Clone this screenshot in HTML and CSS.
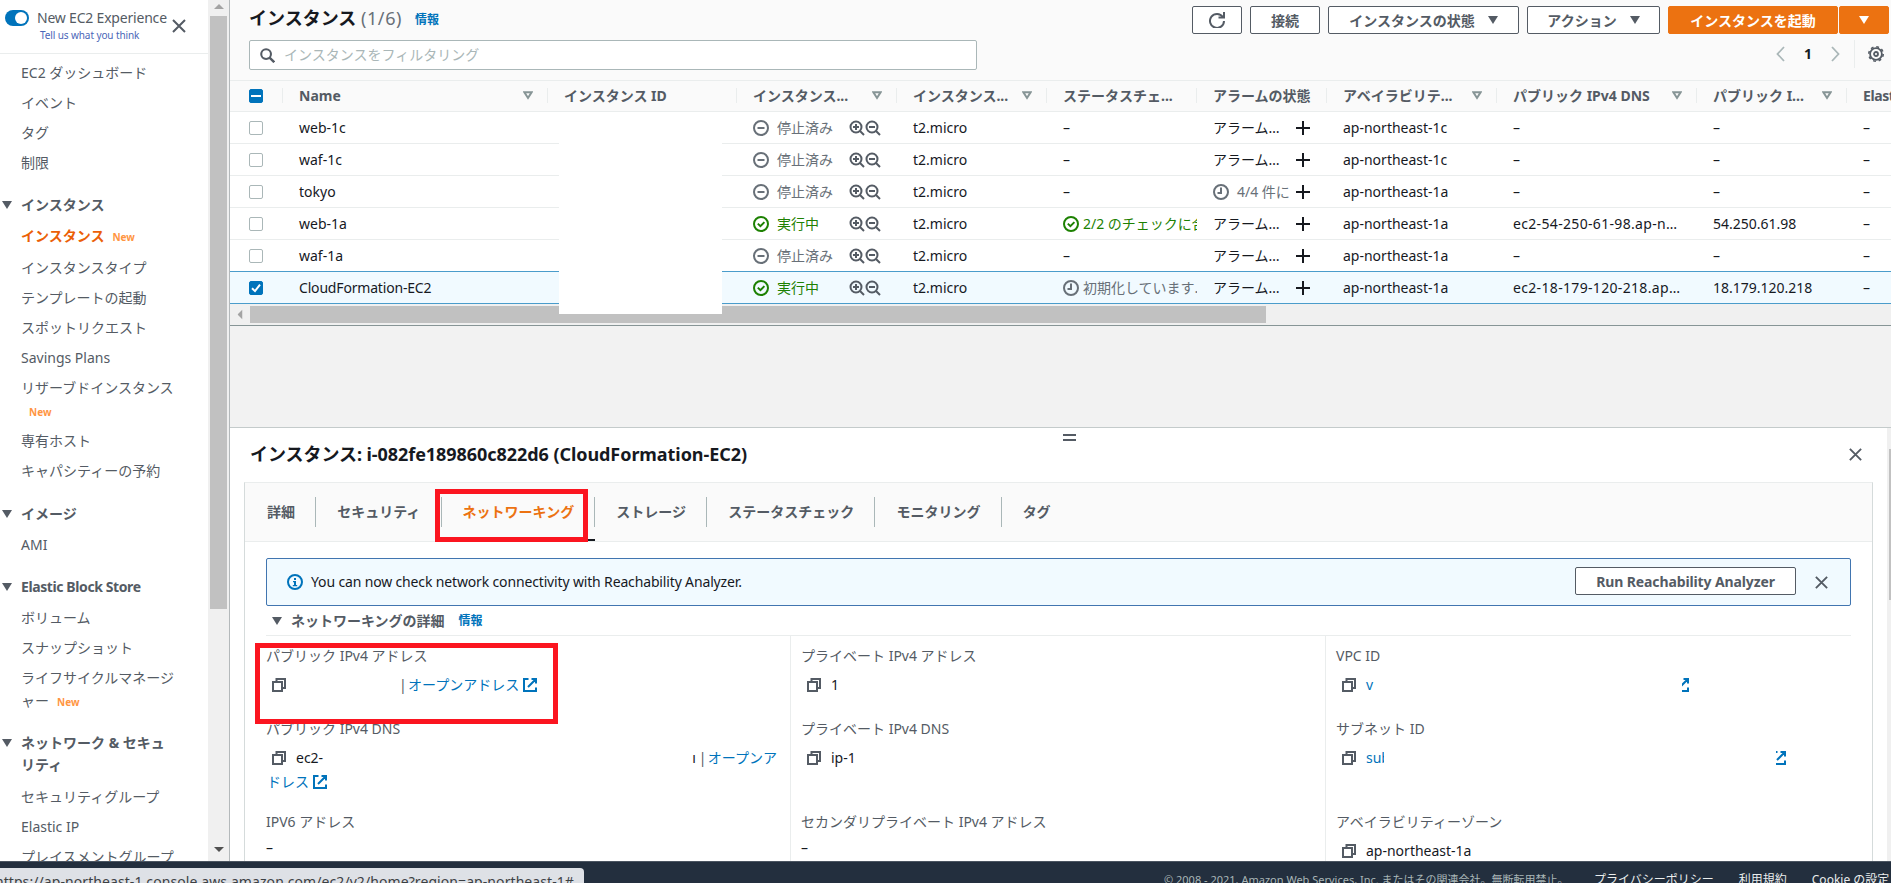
FILE: index.html
```html
<!DOCTYPE html>
<html lang="ja">

<head>
    <meta charset="UTF-8">
    <meta name="viewport" content="width=device-width, initial-scale=1.0">
    <title>インスタンス | EC2</title>
    <link rel="stylesheet" href="styles.css">
</head>

<body>

    <!-- icons -->
    <svg class="icon-defs">
        <symbol id="close" viewBox="0 0 16 16"><path d="M2 2l12 12M14 2L2 14" fill="none" stroke="currentColor" stroke-width="2"/></symbol>
        <symbol id="stopped" viewBox="0 0 16 16"><circle cx="8" cy="8" r="7" fill="none" stroke="currentColor" stroke-width="2"/><path d="M4.500 8h7" stroke="currentColor" stroke-width="2"/></symbol>
        <symbol id="ok" viewBox="0 0 16 16"><circle cx="8" cy="8" r="7" fill="none" stroke="currentColor" stroke-width="2"/><path d="M4.800 7.600l2.600 2.500 4-4" fill="none" stroke="currentColor" stroke-width="2"/></symbol>
        <symbol id="pending" viewBox="0 0 16 16"><circle cx="8" cy="8" r="7" fill="none" stroke="currentColor" stroke-width="2"/><path d="M8 3.500V9H4.500" fill="none" stroke="currentColor" stroke-width="2"/></symbol>
        <symbol id="zoom-in" viewBox="0 0 16 16"><circle cx="7" cy="7" r="5.500" fill="none" stroke="currentColor" stroke-width="2"/><path d="M11 11l4 4" stroke="currentColor" stroke-width="2"/><path d="M4 7h6M7 4v6" stroke="currentColor" stroke-width="2"/></symbol>
        <symbol id="zoom-out" viewBox="0 0 16 16"><circle cx="7" cy="7" r="5.500" fill="none" stroke="currentColor" stroke-width="2"/><path d="M11 11l4 4M4 7h6" stroke="currentColor" stroke-width="2"/></symbol>
        <symbol id="plus" viewBox="0 0 16 16"><path d="M1 8h14M8 1v14" stroke="currentColor" stroke-width="2"/></symbol>
        <symbol id="sort" viewBox="0 0 10 9"><path d="M1.400 1.300h7.200L5 7z" fill="none" stroke="currentColor" stroke-width="2"/></symbol>
        <symbol id="caret" viewBox="0 0 10 8"><path d="M0 0h10L5 8z" fill="currentColor"/></symbol>
        <symbol id="arrow" viewBox="0 0 10 5"><path d="M0 0h10L5 5z" fill="currentColor"/></symbol>
        <symbol id="copy" viewBox="0 0 14 14"><path d="M1 4h9v9H1z" fill="none" stroke="currentColor" stroke-width="2"/><path d="M4.500 4V1H13v9h-3" fill="none" stroke="currentColor" stroke-width="2"/></symbol>
        <symbol id="external" viewBox="0 0 14 14"><path d="M5.500 1H1v12h12V9.500M8.500 1H13v4.500M12.500 1.500L5 9" fill="none" stroke="currentColor" stroke-width="2"/></symbol>
        <symbol id="info" viewBox="0 0 16 16"><circle cx="8" cy="8" r="7" fill="none" stroke="currentColor" stroke-width="2"/><path d="M7 4h2v2H7zM6 7h3v4h1.200v1.300H5.800V11H7V8.300H6z" fill="currentColor"/></symbol>
    </svg>

    <div class="console">

        <div class="sidebar">
            <div class="nav">
                <div class="experience">
                    <span class="toggle"></span>
                    <div class="experience-text">
                        New EC2 Experience
                        <a href="#">Tell us what you think</a>
                    </div>
                    <svg class="close-nav"><use href="#close"/></svg>
                </div>
                <ul class="nav-list">
                    <li>EC2 ダッシュボード</li>
                    <li>イベント</li>
                    <li>タグ</li>
                    <li>制限</li>
                    <li class="heading"><svg><use href="#caret"/></svg>インスタンス</li>
                    <li class="active">インスタンス<span class="new">New</span></li>
                    <li>インスタンスタイプ</li>
                    <li>テンプレートの起動</li>
                    <li>スポットリクエスト</li>
                    <li>Savings Plans</li>
                    <li class="wrapped">リザーブドインスタンス<br><span class="new">New</span></li>
                    <li>専有ホスト</li>
                    <li class="last">キャパシティーの予約</li>
                    <li class="heading"><svg><use href="#caret"/></svg>イメージ</li>
                    <li>AMI</li>
                    <li class="heading latin"><svg><use href="#caret"/></svg>Elastic Block Store</li>
                    <li>ボリューム</li>
                    <li>スナップショット</li>
                    <li class="wrapped">ライフサイクルマネージ<br>ャー<span class="new">New</span></li>
                    <li class="heading tall"><svg><use href="#caret"/></svg>ネットワーク &amp; セキュ<br>リティ</li>
                    <li>セキュリティグループ</li>
                    <li>Elastic IP</li>
                    <li>プレイスメントグループ</li>
                </ul>
            </div>
            <div class="nav-scroll">
                <svg class="up"><use href="#arrow"/></svg>
                <div class="nav-thumb"></div>
                <svg class="down"><use href="#arrow"/></svg>
            </div>
        </div>

        <div class="main">

            <div class="toolbar">
                <h1>インスタンス <span>(1/6)</span></h1>
                <a class="info-link" href="#">情報</a>
                <div class="actions">
                    <button class="btn refresh"><svg viewBox="0 0 16 16"><path d="M13.800 5A7 7 0 1 0 15 9" fill="none" stroke="currentColor" stroke-width="2"/><path d="M9.500 5.500H15V0" fill="none" stroke="currentColor" stroke-width="2"/></svg></button>
                    <button class="btn connect">接続</button>
                    <button class="btn state">インスタンスの状態<svg><use href="#caret"/></svg></button>
                    <button class="btn action">アクション<svg><use href="#caret"/></svg></button>
                    <div class="launch">
                        <button class="btn primary">インスタンスを起動</button>
                        <button class="btn primary more"><svg><use href="#caret"/></svg></button>
                    </div>
                </div>
            </div>

            <div class="filter-bar">
                <div class="search">
                    <svg viewBox="0 0 16 16"><circle cx="6.500" cy="6.500" r="5.200" fill="none" stroke="currentColor" stroke-width="2.200"/><path d="M10.200 10.200l5 5" stroke="currentColor" stroke-width="2.600"/></svg>
                    インスタンスをフィルタリング
                </div>
                <div class="pager">
                    <svg viewBox="0 0 9 16"><path d="M8 1L1.500 8 8 15" fill="none" stroke="currentColor" stroke-width="1.800"/></svg>
                    <b>1</b>
                    <svg viewBox="0 0 9 16"><path d="M1 1l6.500 7L1 15" fill="none" stroke="currentColor" stroke-width="1.800"/></svg>
                </div>
                <div class="settings">
                    <svg viewBox="0 0 16 16"><circle cx="8" cy="8" r="5.900" fill="none" stroke="currentColor" stroke-width="1.800"/><circle cx="8" cy="8" r="7.200" fill="none" stroke="currentColor" stroke-width="1.600" stroke-dasharray="2.830 2.830"/><circle cx="8" cy="8" r="2" fill="none" stroke="currentColor" stroke-width="1.800"/></svg>
                </div>
            </div>

            <div class="table">
                <div class="row head">
                    <div class="cell"><span class="check mixed"></span></div>
                    <div class="cell"><span>Name</span><svg><use href="#sort"/></svg></div>
                    <div class="cell">インスタンス ID</div>
                    <div class="cell"><span>インスタンス...</span><svg><use href="#sort"/></svg></div>
                    <div class="cell"><span>インスタンス...</span><svg><use href="#sort"/></svg></div>
                    <div class="cell">ステータスチェ...</div>
                    <div class="cell">アラームの状態</div>
                    <div class="cell"><span>アベイラビリテ...</span><svg><use href="#sort"/></svg></div>
                    <div class="cell"><span>パブリック IPv4 DNS</span><svg><use href="#sort"/></svg></div>
                    <div class="cell"><span>パブリック I...</span><svg><use href="#sort"/></svg></div>
                    <div class="cell latin">Elastic IP</div>
                </div>
                <div class="row">
                    <div class="cell"><span class="check"></span></div>
                    <div class="cell">web-1c</div>
                    <div class="cell"></div>
                    <div class="cell status"><svg><use href="#stopped"/></svg><span>停止済み</span><i><svg><use href="#zoom-in"/></svg><svg><use href="#zoom-out"/></svg></i></div>
                    <div class="cell">t2.micro</div>
                    <div class="cell">–</div>
                    <div class="cell alarm"><span>アラーム…</span><svg><use href="#plus"/></svg></div>
                    <div class="cell">ap-northeast-1c</div>
                    <div class="cell">–</div>
                    <div class="cell">–</div>
                    <div class="cell">–</div>
                </div>
                <div class="row">
                    <div class="cell"><span class="check"></span></div>
                    <div class="cell">waf-1c</div>
                    <div class="cell"></div>
                    <div class="cell status"><svg><use href="#stopped"/></svg><span>停止済み</span><i><svg><use href="#zoom-in"/></svg><svg><use href="#zoom-out"/></svg></i></div>
                    <div class="cell">t2.micro</div>
                    <div class="cell">–</div>
                    <div class="cell alarm"><span>アラーム…</span><svg><use href="#plus"/></svg></div>
                    <div class="cell">ap-northeast-1c</div>
                    <div class="cell">–</div>
                    <div class="cell">–</div>
                    <div class="cell">–</div>
                </div>
                <div class="row">
                    <div class="cell"><span class="check"></span></div>
                    <div class="cell">tokyo</div>
                    <div class="cell"></div>
                    <div class="cell status"><svg><use href="#stopped"/></svg><span>停止済み</span><i><svg><use href="#zoom-in"/></svg><svg><use href="#zoom-out"/></svg></i></div>
                    <div class="cell">t2.micro</div>
                    <div class="cell">–</div>
                    <div class="cell alarm"><span class="pending"><svg><use href="#pending"/></svg>4/4 件に</span><svg><use href="#plus"/></svg></div>
                    <div class="cell">ap-northeast-1a</div>
                    <div class="cell">–</div>
                    <div class="cell">–</div>
                    <div class="cell">–</div>
                </div>
                <div class="row">
                    <div class="cell"><span class="check"></span></div>
                    <div class="cell">web-1a</div>
                    <div class="cell"></div>
                    <div class="cell status running"><svg><use href="#ok"/></svg><span>実行中</span><i><svg><use href="#zoom-in"/></svg><svg><use href="#zoom-out"/></svg></i></div>
                    <div class="cell">t2.micro</div>
                    <div class="cell health passed"><svg><use href="#ok"/></svg>2/2 のチェックに合</div>
                    <div class="cell alarm"><span>アラーム…</span><svg><use href="#plus"/></svg></div>
                    <div class="cell">ap-northeast-1a</div>
                    <div class="cell address">ec2-54-250-61-98.ap-n…</div>
                    <div class="cell">54.250.61.98</div>
                    <div class="cell">–</div>
                </div>
                <div class="row">
                    <div class="cell"><span class="check"></span></div>
                    <div class="cell">waf-1a</div>
                    <div class="cell"></div>
                    <div class="cell status"><svg><use href="#stopped"/></svg><span>停止済み</span><i><svg><use href="#zoom-in"/></svg><svg><use href="#zoom-out"/></svg></i></div>
                    <div class="cell">t2.micro</div>
                    <div class="cell">–</div>
                    <div class="cell alarm"><span>アラーム…</span><svg><use href="#plus"/></svg></div>
                    <div class="cell">ap-northeast-1a</div>
                    <div class="cell">–</div>
                    <div class="cell">–</div>
                    <div class="cell">–</div>
                </div>
                <div class="row selected">
                    <div class="cell"><span class="check on"><svg viewBox="0 0 14 14"><path d="M3 7.200l3 2.900L11 3.600" fill="none" stroke="#fff" stroke-width="2"/></svg></span></div>
                    <div class="cell name">CloudFormation-EC2</div>
                    <div class="cell"></div>
                    <div class="cell status running"><svg><use href="#ok"/></svg><span>実行中</span><i><svg><use href="#zoom-in"/></svg><svg><use href="#zoom-out"/></svg></i></div>
                    <div class="cell">t2.micro</div>
                    <div class="cell health"><svg><use href="#pending"/></svg>初期化しています..</div>
                    <div class="cell alarm"><span>アラーム…</span><svg><use href="#plus"/></svg></div>
                    <div class="cell">ap-northeast-1a</div>
                    <div class="cell address">ec2-18-179-120-218.ap…</div>
                    <div class="cell">18.179.120.218</div>
                    <div class="cell">–</div>
                </div>
                <div class="table-scroll">
                    <svg><use href="#arrow"/></svg>
                    <div class="table-thumb"></div>
                </div>
                <div class="mask"></div>
            </div>

            <div class="split">
                <div class="panel">
                    <div class="handle"></div>
                    <div class="panel-title">
                        <h2>インスタンス: i-082fe189860c822d6 (CloudFormation-EC2)</h2>
                        <svg><use href="#close"/></svg>
                    </div>
                    <div class="card">
                        <div class="tabs">
                            <div class="tab"><span>詳細</span></div>
                            <div class="tab"><span>セキュリティ</span></div>
                            <div class="tab current"><span>ネットワーキング</span></div>
                            <div class="tab"><span>ストレージ</span></div>
                            <div class="tab"><span>ステータスチェック</span></div>
                            <div class="tab"><span>モニタリング</span></div>
                            <div class="tab"><span>タグ</span></div>
                            <div class="marker marker-tab"></div>
                        </div>
                        <div class="card-body">
                            <div class="alert">
                                <svg class="alert-icon"><use href="#info"/></svg>
                                <span class="alert-text">You can now check network connectivity with Reachability Analyzer.</span>
                                <button class="btn analyze">Run Reachability Analyzer</button>
                                <svg class="alert-close"><use href="#close"/></svg>
                            </div>
                            <div class="section">
                                <svg><use href="#caret"/></svg>
                                <b>ネットワーキングの詳細</b>
                                <a class="info-link" href="#">情報</a>
                            </div>
                            <div class="details">
                                <div class="col">
                                    <div class="item">
                                        <div class="label">パブリック IPv4 アドレス</div>
                                        <div class="value"><svg class="copy"><use href="#copy"/></svg><span class="hidden-ip"></span><span class="bar">|</span><a href="#">オープンアドレス</a><svg class="ext"><use href="#external"/></svg></div>
                                    </div>
                                    <div class="item dns">
                                        <div class="label">パブリック IPv4 DNS</div>
                                        <div class="value"><svg class="copy"><use href="#copy"/></svg>ec2-<span class="hidden-dns"></span>ı <span class="bar">|</span><a href="#">オープンア</a></div>
                                        <div class="value second"><a href="#">ドレス</a><svg class="ext"><use href="#external"/></svg></div>
                                    </div>
                                    <div class="item">
                                        <div class="label">IPV6 アドレス</div>
                                        <div class="dash">–</div>
                                    </div>
                                    <div class="marker marker-ip"></div>
                                </div>
                                <div class="col">
                                    <div class="item">
                                        <div class="label">プライベート IPv4 アドレス</div>
                                        <div class="value"><svg class="copy"><use href="#copy"/></svg>1</div>
                                    </div>
                                    <div class="item dns">
                                        <div class="label">プライベート IPv4 DNS</div>
                                        <div class="value"><svg class="copy"><use href="#copy"/></svg>ip-1</div>
                                    </div>
                                    <div class="item">
                                        <div class="label">セカンダリプライベート IPv4 アドレス</div>
                                        <div class="dash">–</div>
                                    </div>
                                </div>
                                <div class="col">
                                    <div class="item">
                                        <div class="label">VPC ID</div>
                                        <div class="value"><svg class="copy"><use href="#copy"/></svg><a class="vpc" href="#">v</a><svg class="ext half" viewBox="7 0 7 14"><use href="#external" width="14" height="14"/></svg></div>
                                    </div>
                                    <div class="item dns">
                                        <div class="label">サブネット ID</div>
                                        <div class="value"><svg class="copy"><use href="#copy"/></svg><a class="subnet" href="#"><span>sub</span></a><svg class="ext most" viewBox="4 0 10 14"><use href="#external" width="14" height="14"/></svg></div>
                                    </div>
                                    <div class="item">
                                        <div class="label">アベイラビリティーゾーン</div>
                                        <div class="value"><svg class="copy"><use href="#copy"/></svg>ap-northeast-1a</div>
                                    </div>
                                </div>
                            </div>
                        </div>
                    </div>
                </div>
                <div class="panel-scroll"><div class="panel-thumb"></div></div>
            </div>
        </div>
    </div>

    <div class="footer">
        <span class="copyright">© 2008 - 2021, Amazon Web Services, Inc. またはその関連会社。無断転用禁止。</span>
        <a href="#">プライバシーポリシー</a>
        <a href="#">利用規約</a>
        <a href="#">Cookie の設定</a>
        <div class="status-url"><span>https://ap-northeast-1.console.aws.amazon.com/ec2/v2/home?region=ap-northeast-1#</span></div>
    </div>

</body>

</html>
```
FILE: styles.css
```css
* {
    box-sizing: border-box;
}

body {
    margin: 0;
    width: 1891px;
    height: 883px;
    overflow: hidden;
    background-color: #fff;
    color: #16191f;
    font-family: "Noto Sans", "Noto Sans CJK JP", sans-serif;
    font-size: 14px;
    line-height: 22px;
}

a {
    color: #0073bb;
    text-decoration: none;
}

svg {
    display: block;
    flex: none;
}

.icon-defs {
    display: none;
}

.console {
    display: flex;
    height: 861px;
    overflow: hidden;
}

/* left navigation */
.sidebar {
    display: flex;
    width: 230px;
    flex: none;
    border-right: 1px solid #b4b9bb;
    color: #545b64;
}

.nav {
    width: 208px;
    overflow: hidden;
}

.experience {
    display: flex;
    height: 54px;
    padding: 10px 0 0 5px;
    border-bottom: 1px solid #eaeded;
}

.toggle {
    width: 24px;
    height: 16px;
    border-radius: 8px;
    background-color: #0073bb;
    display: flex;
    justify-content: flex-end;
    padding: 2px;
}

.toggle::after {
    content: "";
    width: 12px;
    height: 12px;
    border-radius: 50%;
    background-color: #fff;
}

.experience-text {
    width: 134px;
    margin: -1px 0 0 8px;
    line-height: 18px;
    white-space: nowrap;
    letter-spacing: -0.2px;
}

.experience-text a {
    display: block;
    padding-left: 3px;
    font-size: 10px;
    line-height: 16px;
    color: #4a66b8;
    letter-spacing: -0.1px;
}

.close-nav {
    width: 16px;
    height: 16px;
    margin-top: 8px;
}

.nav-list {
    list-style: none;
    margin: 0;
    padding: 4px 0 0 21px;
    white-space: nowrap;
}

.nav-list li {
    height: 30px;
    padding: 4px 0;
}

.nav-list .active {
    height: 32px;
    color: #eb5f07;
    font-weight: bold;
}

.nav-list .wrapped {
    height: 53px;
    padding: 3px 0;
    line-height: 23px;
}

.nav-list .last {
    height: 31px;
}

.nav-list .heading {
    position: relative;
    height: 31px;
    margin-top: 12px;
    font-weight: bold;
}

.nav-list .tall {
    height: 54px;
}

.nav-list .latin, .head .latin {
    letter-spacing: -0.4px;
}

.heading svg {
    position: absolute;
    left: -19px;
    top: 11px;
    width: 10px;
    height: 8px;
}

.new {
    margin-left: 8px;
    font-size: 10px;
    font-weight: bold;
    color: #ff9542;
}

.nav-scroll {
    width: 21px;
    padding: 4px 0 9px;
    display: flex;
    flex-direction: column;
    align-items: center;
    background-color: #f0f0f0;
}

.nav-scroll svg {
    width: 10px;
    height: 5px;
}

.up {
    color: #a3a3a3;
    transform: rotate(180deg);
}

.nav-thumb {
    width: 17px;
    height: 593px;
    margin-top: 7px;
    background-color: #c1c1c1;
}

.down {
    margin-top: auto;
    color: #505050;
}

/* instance list */
.main {
    flex: 1;
    min-width: 0;
    display: flex;
    flex-direction: column;
}

.toolbar {
    display: flex;
    height: 40px;
    padding: 0 2px 0 19px;
    background-color: #fafafa;
}

h1, h2 {
    margin: 0;
    font-size: 18px;
    font-weight: bold;
    line-height: 22px;
    white-space: nowrap;
}

h1 {
    padding-top: 7px;
}

h2 {
    letter-spacing: -0.06px;
}

h1 span {
    font-weight: normal;
    color: #687078;
    letter-spacing: 0.6px;
}

.info-link {
    font-size: 12px;
    font-weight: bold;
    margin: 9px 0 0 13px;
}

.actions {
    display: flex;
    gap: 8px;
    margin: 6px 0 0 auto;
}

.btn {
    display: flex;
    align-items: center;
    justify-content: center;
    height: 28px;
    padding: 0;
    border: 1px solid #545b64;
    border-radius: 2px;
    background-color: #fff;
    color: #545b64;
    font-family: inherit;
    font-size: 14px;
    font-weight: bold;
    white-space: nowrap;
}

.btn svg {
    width: 10px;
    height: 8px;
    margin-left: 13px;
}

.refresh {
    width: 50px;
}

.refresh svg {
    width: 16px;
    height: 16px;
    margin: 0;
}

.connect {
    width: 70px;
}

.state {
    width: 191px;
}

.action {
    width: 133px;
}

.launch {
    display: flex;
    gap: 1px;
}

.primary {
    width: 170px;
    border-color: #ec7211;
    background-color: #ec7211;
    color: #fff;
}

.more {
    width: 50px;
}

.more svg {
    margin: 0;
}

.filter-bar {
    display: flex;
    height: 41px;
    padding: 0 7px 0 19px;
    border-bottom: 1px solid #eaeded;
    background-color: #fafafa;
}

.search {
    display: flex;
    align-items: center;
    width: 728px;
    height: 30px;
    padding-left: 10px;
    border: 1px solid #aab7b8;
    border-radius: 2px;
    background-color: #fff;
    color: #aab7b8;
}

.search svg {
    width: 15px;
    height: 15px;
    margin-right: 9px;
    color: #545b64;
}

.pager {
    display: flex;
    align-items: center;
    height: 28px;
    margin-left: auto;
    color: #aab7b8;
}

.pager svg {
    width: 9px;
    height: 16px;
}

.pager b {
    width: 46px;
    text-align: center;
    color: #16191f;
}

.settings {
    display: flex;
    align-items: center;
    height: 28px;
    margin-left: 14px;
    padding-left: 13px;
    border-left: 1px solid #eaeded;
    color: #545b64;
}

.settings svg {
    width: 16px;
    height: 16px;
}

.table {
    position: relative;
    height: 245px;
    overflow: hidden;
    border-bottom: 1px solid #879596;
}

.row {
    display: grid;
    grid-template-columns: 53px 265px 189px 160px 150px 150px 130px 170px 200px 150px 150px;
    height: 32px;
    border-bottom: 1px solid #eaeded;
}

.cell {
    display: flex;
    align-items: center;
    padding-left: 16px;
    overflow: hidden;
    white-space: nowrap;
}

.cell:first-child {
    padding-left: 19px;
}

.head {
    height: 31px;
    background-color: #fafafa;
    color: #545b64;
    font-weight: bold;
}

.head .cell {
    height: 15px;
    margin-top: 7px;
    border-right: 1px solid #eaeded;
    overflow: visible;
}

.head .cell svg {
    width: 10px;
    height: 9px;
    margin: 0 14px 0 auto;
    color: #879596;
}

.check {
    width: 14px;
    height: 14px;
    border: 1px solid #aab7b8;
    border-radius: 2px;
    background-color: #fff;
}

.check svg {
    width: 14px;
    height: 14px;
    margin: -1px;
}

.mixed, .on {
    border-color: #0073bb;
    background-color: #0073bb;
}

.mixed {
    display: flex;
    align-items: center;
    justify-content: center;
}

.mixed::after {
    content: "";
    width: 10px;
    height: 2px;
    background-color: #fff;
}

.name {
    letter-spacing: -0.18px;
}

.address {
    letter-spacing: 0.33px;
}

.status svg, .pending svg, .health svg {
    width: 16px;
    height: 16px;
}

.status, .pending, .health {
    color: #687078;
}

.status > span {
    width: 80px;
    padding-left: 8px;
}

.status i {
    display: flex;
    color: #545b64;
}

.running, .passed {
    color: #1d8102;
}

.health svg {
    margin-right: 4px;
}

.alarm > span {
    display: flex;
    align-items: center;
    width: 78px;
    overflow: hidden;
}

.pending svg {
    margin-right: 8px;
}

.alarm > svg {
    width: 16px;
    height: 16px;
    margin-left: 4px;
}

.row.selected {
    height: 33px;
    margin-top: -1px;
    border: 1px solid #4a9ccb;
    border-right: none;
    background-color: #f1faff;
    margin-left: -1px;
}

.table-scroll {
    display: flex;
    align-items: center;
    height: 21px;
    background-color: #f0f0f0;
}

.table-scroll svg {
    width: 10px;
    height: 5px;
    margin: 0 9px 0 5px;
    color: #a3a3a3;
    transform: rotate(90deg);
}

.table-thumb {
    width: 1016px;
    height: 17px;
    margin-left: -4px;
    background-color: #c1c1c1;
}

/* hides the instance ids */
.mask {
    position: absolute;
    left: 329px;
    top: 31px;
    width: 163px;
    height: 202px;
    background-color: #fff;
}

/* detail panel */
.split {
    flex: 1;
    min-height: 0;
    margin-top: 101px;
    display: flex;
    border-top: 1px solid #c4cbcb;
    background-color: #fff;
    box-shadow: 0 -101px 0 #f2f2f2;
}

.panel {
    flex: 1;
    padding: 6px 14px 0;
}

.panel-scroll {
    width: 4px;
    padding: 21px 0 0 2px;
    background-color: #f0f0f0;
}

.panel-thumb {
    height: 151px;
    background-color: #c1c1c1;
}

.handle {
    width: 13px;
    height: 7px;
    margin: 0 0 0 819px;
    border-top: 2px solid #545b64;
    border-bottom: 2px solid #545b64;
}

.panel-title {
    display: flex;
    justify-content: space-between;
    height: 41px;
    padding: 3px 10px 0 6px;
}

.panel-title h2 {
    margin-top: -1px;
}

.panel-title svg {
    width: 15px;
    height: 15px;
    margin-top: 3px;
    color: #545b64;
}

.card {
    height: 420px;
    border: 1px solid #d5dbdb;
    border-top-color: #eaeded;
}

.tabs {
    position: relative;
    display: flex;
    height: 59px;
    padding-left: 1px;
    border-bottom: 1px solid #eaeded;
    background-color: #fafafa;
}

.tab {
    padding: 14px 0;
    color: #545b64;
    font-weight: bold;
}

.tab span {
    display: block;
    height: 30px;
    padding: 0 20.200px 0 21px;
    border-right: 1px solid #aab7b8;
    line-height: 30px;
}

.tab:nth-child(7) span {
    border: none;
}

.current {
    color: #ec7211;
    border-bottom: 2px solid #16191f;
}

/* red marker frames */
.marker {
    position: absolute;
    border: 5px solid #fb1520;
}

.marker-tab {
    left: 190px;
    top: 6px;
    width: 153px;
    height: 53px;
}

.marker-ip {
    left: -11px;
    top: 7px;
    width: 303px;
    height: 81px;
}

.card-body {
    padding: 16px 21px 0;
}

.alert {
    display: flex;
    align-items: center;
    height: 48px;
    padding: 0 21px 0 20px;
    border: 1px solid #4175b0;
    border-radius: 2px;
    background-color: #f1faff;
}

.alert-icon {
    width: 16px;
    height: 16px;
    color: #0073bb;
}

.alert-text {
    margin-left: 8px;
    letter-spacing: -0.15px;
}

.analyze {
    width: 221px;
    margin: 0 18px 2px auto;
    letter-spacing: -0.12px;
}

.alert-close {
    width: 15px;
    height: 15px;
    color: #545b64;
}

.section {
    display: flex;
    align-items: center;
    height: 30px;
    padding: 1px 0 0 6px;
    border-bottom: 1px solid #eaeded;
    color: #545b64;
}

.section svg {
    width: 10px;
    height: 8px;
    margin-right: 9px;
}

.section .info-link {
    margin: 0 0 0 14px;
}

.details {
    display: grid;
    grid-template-columns: 525px 535px 1fr;
    height: 240px;
    white-space: nowrap;
}

.col {
    position: relative;
    padding-top: 9px;
    border-right: 1px solid #eaeded;
}

.col + .col {
    padding-left: 10px;
}

.col:last-child {
    border: none;
}

.item {
    height: 73px;
}

.item.dns {
    height: 93px;
}

.label {
    color: #545b64;
}

.value {
    display: flex;
    align-items: center;
    height: 22px;
    margin-top: 7px;
    padding-left: 6px;
}

.copy {
    width: 14px;
    height: 14px;
    margin-right: 10px;
    color: #545b64;
}

.ext {
    width: 14px;
    height: 14px;
    margin-left: 4px;
    color: #0073bb;
}

.bar {
    width: 9px;
    color: #545b64;
}

.hidden-ip {
    width: 103px;
}

.hidden-dns {
    width: 369px;
}

.dns .bar {
    margin-left: 3px;
}

.value.second {
    margin-top: 2px;
    padding-left: 1px;
}

.vpc {
    width: 312px;
}

.subnet {
    width: 406px;
}

.subnet span {
    display: block;
    width: 18px;
    overflow: hidden;
}

.half {
    width: 7px;
}

.most {
    width: 10px;
}

.dash {
    margin-top: 4px;
}

/* footer */
.footer {
    position: relative;
    display: flex;
    height: 22px;
    padding: 9px 0 0 1164px;
    overflow: hidden;
    border-top: 1px solid #4b5561;
    background-color: #232f3e;
    color: #aab7b8;
    font-size: 12px;
    line-height: 18px;
    white-space: nowrap;
}

.copyright {
    flex: none;
    width: 430px;
    font-size: 11px;
}

.footer a {
    flex: none;
    margin-right: 25px;
    color: #eaeded;
}

.status-url {
    position: absolute;
    left: 0;
    top: 6px;
    width: 584px;
    height: 30px;
    padding: 3px 10px 0 0;
    overflow: hidden;
    display: flex;
    justify-content: flex-end;
    border-top-right-radius: 4px;
    background-color: #dee1e6;
    color: #3c4043;
    font-size: 14px;
    line-height: 22px;
    letter-spacing: 0.080px;
}
```
